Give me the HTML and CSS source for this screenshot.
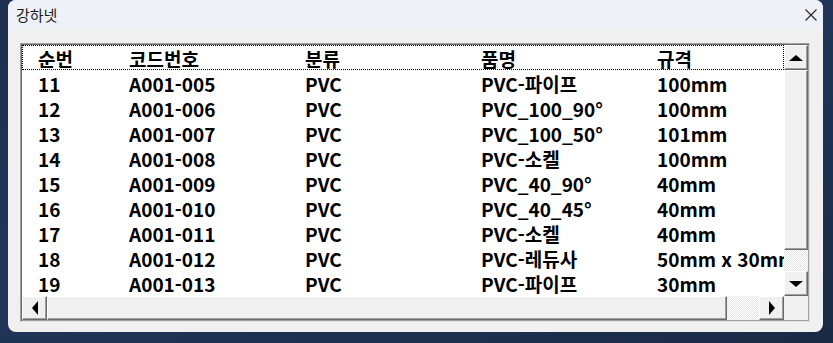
FILE: index.html
```html
<!DOCTYPE html>
<html lang="ko">
<head>
    <meta charset="UTF-8">
    <title>강하넷</title>
    <link rel="stylesheet" href="styles.css">
</head>
<body>

<div class="window">
    <div class="titlebar">
        <span class="title">강하넷</span>
        <svg class="close" width="12" height="12" viewBox="0 0 12 12">
            <path d="M0.5 0.5 L11.5 11.5 M11.5 0.5 L0.5 11.5" stroke="#222" stroke-width="1.1" fill="none"/>
        </svg>
    </div>
    <div class="client">
        <div class="listbox">
            <div class="items">
                <div class="row head">
                    <span>순번</span><span>코드번호</span><span>분류</span><span>품명</span><span>규격</span>
                </div>
                <div class="row"><span>11</span><span>A001-005</span><span>PVC</span><span>PVC-파이프</span><span>100mm</span></div>
                <div class="row"><span>12</span><span>A001-006</span><span>PVC</span><span>PVC_100_90°</span><span>100mm</span></div>
                <div class="row"><span>13</span><span>A001-007</span><span>PVC</span><span>PVC_100_50°</span><span>101mm</span></div>
                <div class="row"><span>14</span><span>A001-008</span><span>PVC</span><span>PVC-소켈</span><span>100mm</span></div>
                <div class="row"><span>15</span><span>A001-009</span><span>PVC</span><span>PVC_40_90°</span><span>40mm</span></div>
                <div class="row"><span>16</span><span>A001-010</span><span>PVC</span><span>PVC_40_45°</span><span>40mm</span></div>
                <div class="row"><span>17</span><span>A001-011</span><span>PVC</span><span>PVC-소켈</span><span>40mm</span></div>
                <div class="row"><span>18</span><span>A001-012</span><span>PVC</span><span>PVC-레듀사</span><span>50mm x 30mm</span></div>
                <div class="row"><span>19</span><span>A001-013</span><span>PVC</span><span>PVC-파이프</span><span>30mm</span></div>
            </div>

            <div class="vscroll">
                <div class="btn"><span class="arrow up"></span></div>
                <div class="thumb v"></div>
                <div class="track"></div>
                <div class="btn"><span class="arrow down"></span></div>
            </div>

            <div class="hscroll">
                <div class="btn"><span class="arrow left"></span></div>
                <div class="thumb h"></div>
                <div class="track"></div>
                <div class="btn"><span class="arrow right"></span></div>
            </div>

            <div class="corner"></div>
        </div>
    </div>
</div>

</body>
</html>
```

FILE: styles.css
```css
body {
    margin: 0;
    width: 833px;
    height: 343px;
    overflow: hidden;
    background: linear-gradient(160deg, #1d2f4f 0%, #22365a 45%, #1a2a44 100%);
    font-family: 'Noto Sans CJK KR', 'Noto Sans', sans-serif;
}
.window {
    margin-left: 8px;
    width: 815px;
    height: 332px;
    background: #f0f0f0;
    border-radius: 8px;
    overflow: hidden;
    display: flex;
    flex-direction: column;
}
.titlebar {
    height: 30px;
    background: #eef2f8;
    display: flex;
    align-items: center;
    justify-content: space-between;
    padding: 0 6px 0 8px;
    flex-shrink: 0;
}
.title {
    font-size: 15px;
    color: #1a1a1a;
    margin-top: -1px;
}
.close {
    margin-top: -1px;
}
.client {
    flex: 1;
    padding: 13px 13px 0 12px;
}
.listbox {
    width: 790px;
    height: 279px;
    box-sizing: border-box;
    border: 1px solid #a0a0a0;
    border-right-color: #e3e3e3;
    border-bottom-color: #e3e3e3;
    box-shadow: inset 1px 1px 0 #696969, inset -1px -1px 0 #a0a0a0;
    padding: 1px;
    display: grid;
    grid-template-columns: 1fr 24px;
    grid-template-rows: 251px 1fr;
    background: #f0f0f0;
}
.items {
    background: #fff;
    overflow: hidden;
    font-size: 19px;
    font-weight: 700;
    color: #000;
}
.row {
    height: 25px;
    display: grid;
    grid-template-columns: 91px 176px 176px 176px 1fr;
    padding-left: 16px;
    align-items: center;
    white-space: nowrap;
    line-height: 25px;
}
.row span {
    overflow: hidden;
    padding-top: 2px;
}
.row.head {
    outline: 1px dotted #000;
    outline-offset: -1px;
}
.vscroll {
    display: flex;
    flex-direction: column;
}
.hscroll {
    display: flex;
}
.btn, .thumb {
    box-sizing: border-box;
    background: #f0f0f0;
    border: 1px solid;
    border-color: #fff #696969 #696969 #fff;
    box-shadow: inset -1px -1px 0 #a0a0a0;
    display: flex;
    align-items: center;
    justify-content: center;
}
.vscroll .btn {
    height: 25px;
}
.hscroll .btn {
    width: 25px;
}
.thumb.v {
    height: 180px;
}
.thumb.h {
    width: 680px;
}
.track {
    flex: 1;
    background: repeating-conic-gradient(#fff 0 25%, #e6e6e6 0 50%) 0 0 / 2px 2px;
}
.corner {
    background: #f0f0f0;
}
.arrow {
    width: 0;
    height: 0;
    border: 0 solid transparent;
}
.arrow.up {
    border-width: 0 7px 6px;
    border-bottom-color: #000;
}
.arrow.down {
    border-width: 6px 7px 0;
    border-top-color: #000;
}
.arrow.left {
    border-width: 7px 6px 7px 0;
    border-right-color: #000;
}
.arrow.right {
    border-width: 7px 0 7px 6px;
    border-left-color: #000;
}
```
